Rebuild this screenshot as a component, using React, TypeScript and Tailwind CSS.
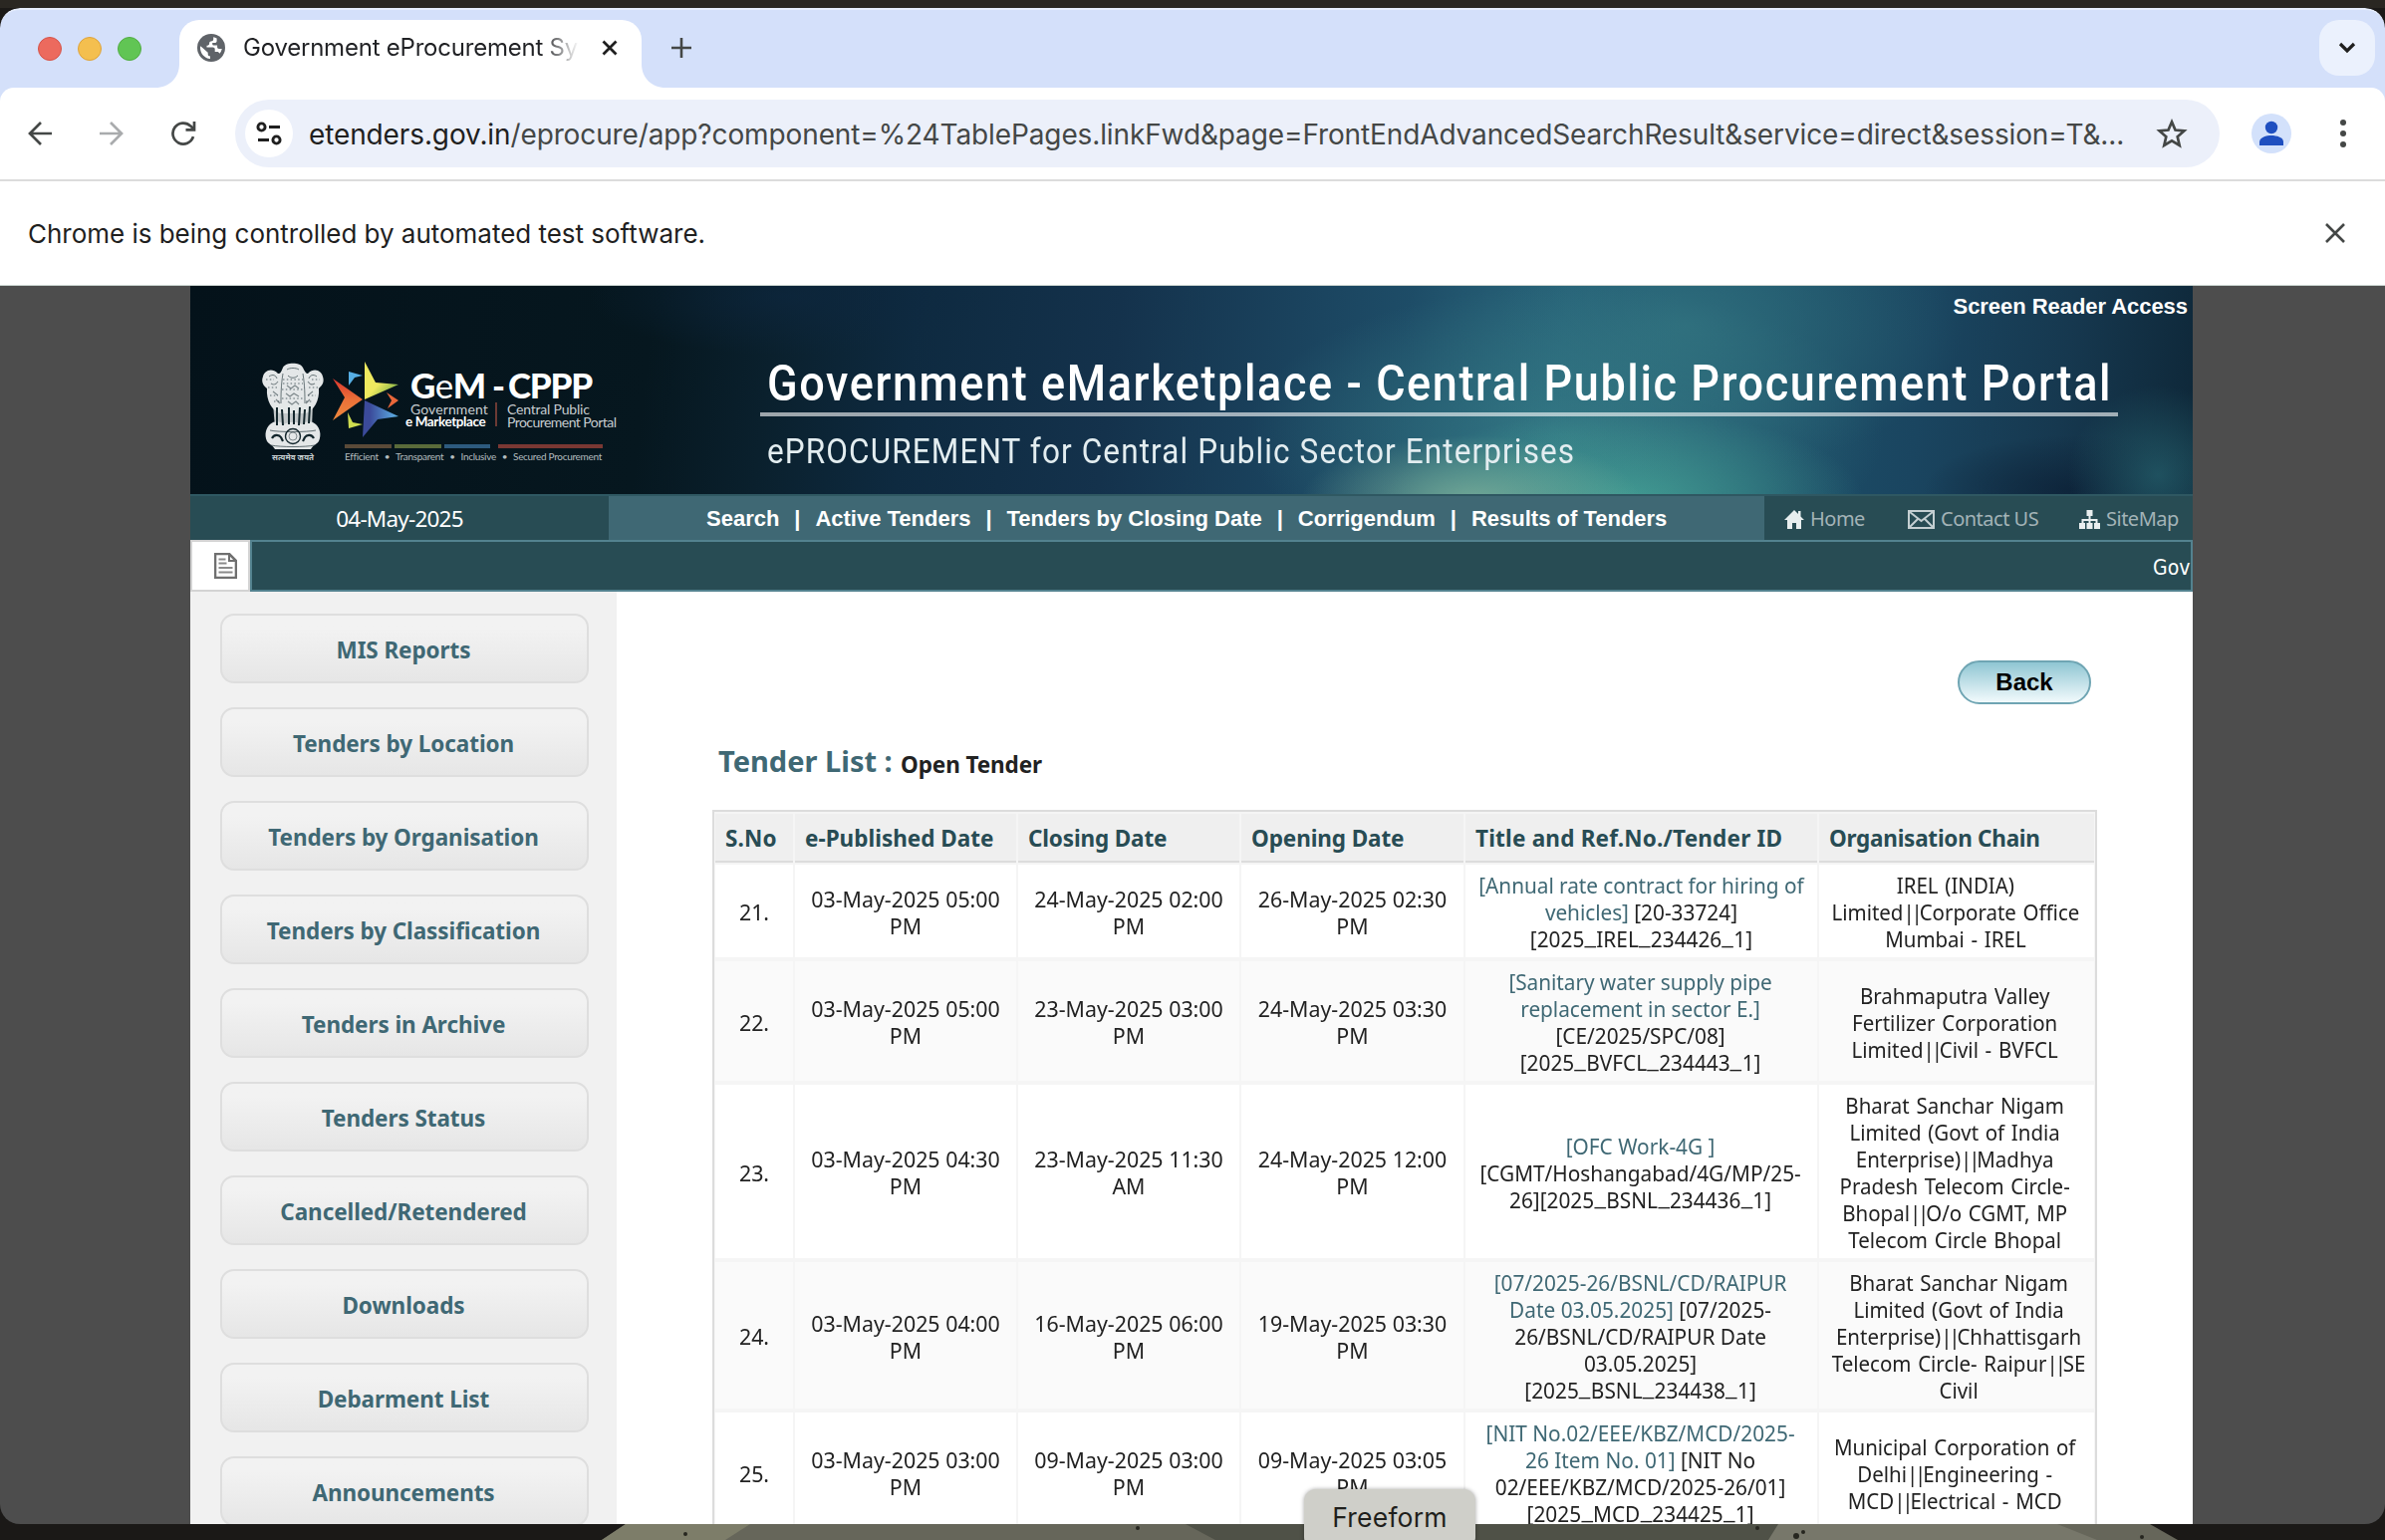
import { Fragment, type ReactNode } from 'react';

type Row = {
  no: string;
  published: [string, string];
  closing: [string, string];
  opening: [string, string];
  title: [string, string][];
  org: string[];
};

const ROWS: Row[] = [
  {
    no: '21.',
    published: ['03-May-2025 05:00', 'PM'],
    closing: ['24-May-2025 02:00', 'PM'],
    opening: ['26-May-2025 02:30', 'PM'],
    title: [
      ['[Annual rate contract for hiring of', ''],
      ['vehicles]', ' [20-33724]'],
      ['', '[2025_IREL_234426_1]'],
    ],
    org: ['IREL (INDIA)', 'Limited||Corporate Office', 'Mumbai - IREL'],
  },
  {
    no: '22.',
    published: ['03-May-2025 05:00', 'PM'],
    closing: ['23-May-2025 03:00', 'PM'],
    opening: ['24-May-2025 03:30', 'PM'],
    title: [
      ['[Sanitary water supply pipe', ''],
      ['replacement in sector E.]', ''],
      ['', '[CE/2025/SPC/08]'],
      ['', '[2025_BVFCL_234443_1]'],
    ],
    org: ['Brahmaputra Valley', 'Fertilizer Corporation', 'Limited||Civil - BVFCL'],
  },
  {
    no: '23.',
    published: ['03-May-2025 04:30', 'PM'],
    closing: ['23-May-2025 11:30', 'AM'],
    opening: ['24-May-2025 12:00', 'PM'],
    title: [
      ['[OFC Work-4G ]', ''],
      ['', '[CGMT/Hoshangabad/4G/MP/25-'],
      ['', '26][2025_BSNL_234436_1]'],
    ],
    org: [
      'Bharat Sanchar Nigam',
      'Limited (Govt of India',
      'Enterprise)||Madhya',
      'Pradesh Telecom Circle-',
      'Bhopal||O/o CGMT, MP',
      'Telecom Circle Bhopal',
    ],
  },
  {
    no: '24.',
    published: ['03-May-2025 04:00', 'PM'],
    closing: ['16-May-2025 06:00', 'PM'],
    opening: ['19-May-2025 03:30', 'PM'],
    title: [
      ['[07/2025-26/BSNL/CD/RAIPUR', ''],
      ['Date 03.05.2025]', ' [07/2025-'],
      ['', '26/BSNL/CD/RAIPUR Date'],
      ['', '03.05.2025]'],
      ['', '[2025_BSNL_234438_1]'],
    ],
    org: [
      'Bharat Sanchar Nigam',
      'Limited (Govt of India',
      'Enterprise)||Chhattisgarh',
      'Telecom Circle- Raipur||SE',
      'Civil',
    ],
  },
  {
    no: '25.',
    published: ['03-May-2025 03:00', 'PM'],
    closing: ['09-May-2025 03:00', 'PM'],
    opening: ['09-May-2025 03:05', 'PM'],
    title: [
      ['[NIT No.02/EEE/KBZ/MCD/2025-', ''],
      ['26 Item No. 01]', ' [NIT No'],
      ['', '02/EEE/KBZ/MCD/2025-26/01]'],
      ['', '[2025_MCD_234425_1]'],
    ],
    org: ['Municipal Corporation of', 'Delhi||Engineering -', 'MCD||Electrical - MCD'],
  },
];

const SIDEBAR = [
  'MIS Reports',
  'Tenders by Location',
  'Tenders by Organisation',
  'Tenders by Classification',
  'Tenders in Archive',
  'Tenders Status',
  'Cancelled/Retendered',
  'Downloads',
  'Debarment List',
  'Announcements',
];

const MENU = ['Search', 'Active Tenders', 'Tenders by Closing Date', 'Corrigendum', 'Results of Tenders'];

const HEADERS: [string, string][] = [
  ['S.No', 'tracking-[0.2px]'],
  ['e-Published Date', 'tracking-[0px]'],
  ['Closing Date', 'tracking-[-0.15px]'],
  ['Opening Date', 'tracking-[-0.1px]'],
  ['Title and Ref.No./Tender ID', 'tracking-[0.2px]'],
  ['Organisation Chain', 'tracking-[-0.26px]'],
];

function TabStrip() {
  return (
    <div className="relative flex h-20 w-full shrink-0 rounded-t-[20px] border-t-2 border-[#e6edfc] bg-[#d4e0fa]">
      <div className="flex w-[180px] items-center gap-4 pl-[38px]">
        <span className="h-6 w-6 rounded-full border border-[#d5544a] bg-[#ec6a5e]" />
        <span className="h-6 w-6 rounded-full border border-[#dea33c] bg-[#f4bf4f]" />
        <span className="h-6 w-6 rounded-full border border-[#51ad42] bg-[#61c554]" />
      </div>
      <div className="relative mt-[10px] flex h-[68px] w-[464px] items-center rounded-t-[20px] bg-white pb-3 pl-[18px]">
        <svg className="absolute bottom-0 -left-6" width="24" height="24" viewBox="0 0 24 24">
          <path d="M24 0v24H0C14 24 24 14 24 0Z" fill="#fff" />
        </svg>
        <svg className="absolute bottom-0 -right-6" width="24" height="24" viewBox="0 0 24 24">
          <path d="M0 0v24h24C10 24 0 14 0 0Z" fill="#fff" />
        </svg>
        <svg width="28" height="28" viewBox="0 0 28 28">
          <circle cx="14" cy="14" r="14" fill="#5f6368" />
          <path d="M16.200 3.300v2c0 1.400-1.100 2.200-2.400 2.300-1.300.1-1.700.9-1.700 2.100 0 1.500-1.300 2-2.600 2v1.800h6.200c1.300 0 2 .8 2 2v2.600h2c1.400 0 2.200.6 2.700 1.700a11 11 0 0 0 2.400-4.800h-3c-1 0-1.700-.7-1.700-1.700v-1.700h-3.400c-1 0-1.500-.8-1.500-1.700V9.100h2.400c1.100 0 2-.8 2-1.900V4.500a11 11 0 0 0-3.400-1.200Z" fill="#fff" />
          <path d="M3 14c0 5.800 4.400 10.600 10 11v-2.500c-1.400 0-2.300-1-2.300-2.300v-1.500L3.300 12.200C3.100 12.800 3 13.400 3 14Z" fill="#fff" />
        </svg>
        <span className="ml-[18px] w-[337px] overflow-hidden whitespace-nowrap bg-gradient-to-r from-[#202124] from-[89%] to-transparent bg-clip-text font-[Inter] text-[24px] leading-8 tracking-[-0.22px] text-transparent">
          Government eProcurement Sy
        </span>
        <svg className="ml-[23px]" width="16" height="16" viewBox="0 0 16 16">
          <path d="m1.500 1.500 13 13m0-13-13 13" stroke="#1f1f1f" strokeWidth="2.800" />
        </svg>
      </div>
      <svg className="ml-[30px] mt-[28px]" width="20" height="20" viewBox="0 0 20 20">
        <path d="M10 0v20M0 10h20" stroke="#444746" strokeWidth="2.600" />
      </svg>
      <div className="ml-auto mr-[10px] mt-[10px] flex h-14 w-14 items-center justify-center rounded-[20px] bg-[#ebf1fd]">
        <svg width="18" height="12" viewBox="0 0 18 12">
          <path d="m2 2 7 7 7-7" stroke="#1f1f1f" strokeWidth="3.200" fill="none" />
        </svg>
      </div>
    </div>
  );
}

function Toolbar() {
  return (
    <div className="w-full shrink-0 bg-[#d4e0fa]">
      <div className="flex h-[94px] items-center rounded-t-[14px] border-b-2 border-[#dcdcdc] bg-white pl-7">
        <svg width="24" height="24" viewBox="0 0 24 24" fill="none" stroke="#444746" strokeWidth="2.700">
          <path d="M24 12H2.500M13 1 2 12l11 11" />
        </svg>
        <svg className="ml-[48px]" width="24" height="24" viewBox="0 0 24 24" fill="none" stroke="#a9abad" strokeWidth="2.700">
          <path d="M0 12h21.500M11 1l11 11-11 11" />
        </svg>
        <svg className="ml-[47px]" width="26" height="26" viewBox="0 0 26 26" fill="none" stroke="#444746" strokeWidth="2.700">
          <path d="M23 16.200A10.500 10.500 0 1 1 20.400 5.600L24 9" />
          <path d="M24 1v8.400H15.500" />
        </svg>
        <div className="ml-[39px] flex h-[68px] w-[1992px] items-center rounded-full bg-[#ecf0fa] pl-[10px]">
          <div className="flex h-12 w-12 items-center justify-center rounded-full bg-white">
            <svg width="26" height="24" viewBox="0 0 26 24" fill="none" stroke="#1f1f1f" strokeWidth="2.900">
              <circle cx="5.500" cy="5.500" r="3.600" />
              <path d="M13 5.500h11M2 18.500h11" />
              <circle cx="20.500" cy="18.500" r="3.600" />
            </svg>
          </div>
          <span className="ml-4 w-[1850px] whitespace-nowrap pt-px font-[Inter] text-[28px] leading-9 tracking-[-0.12px] text-[#444746]">
            <span className="text-[#1f1f1f]">etenders.gov.in</span>
            /eprocure/app?component=%24TablePages.linkFwd&amp;page=FrontEndAdvancedSearchResult&amp;service=direct&amp;session=T&amp;...
          </span>
          <svg className="ml-[4px]" width="32" height="30" viewBox="0 0 32 30">
            <path
              d="m16 3.400 3.500 8.200 8.900.8-6.700 5.900 2 8.700L16 22.400 8.300 27l2-8.700-6.700-5.900 8.900-.8Z"
              fill="none"
              stroke="#444746"
              strokeWidth="2.700"
            />
          </svg>
        </div>
        <div className="ml-8 h-10 w-10 overflow-hidden rounded-full bg-[#d3e1fb]">
          <svg width="40" height="40" viewBox="0 0 40 40" fill="#1f4fc0">
            <circle cx="20" cy="14" r="6.200" />
            <path d="M8 32v-3.500c0-4.600 7-6.500 12-6.500s12 1.900 12 6.500V32Z" />
          </svg>
        </div>
        <svg className="ml-[49px]" width="6" height="28" viewBox="0 0 6 28" fill="#444746">
          <circle cx="3" cy="3" r="3" />
          <circle cx="3" cy="14" r="3" />
          <circle cx="3" cy="25" r="3" />
        </svg>
      </div>
    </div>
  );
}

function Emblem() {
  return (
    <svg width="64" height="104" viewBox="0 0 64 104">
      <g fill="#e4e7e8">
        <path d="M22 6c2-5 17-6 20 0 2 4 3 6 5 6 7-7 14-2 15 3 2 6-1 9-4 12 1 12-5 22-13 25H19C11 49 5 39 6 27c-4-3-6-7-4-12 1-5 8-10 15-3 3 0 3-2 5-6Z" />
        <path d="M12 42h40l-1 24H14Z" opacity=".85" />
        <path d="M9 63c5-4 10-3 14 0 5-3 13-3 18 0 4-3 9-4 14 0 4 4 6 10 3 17-2 3-6 4-8 8H14c-2-4-6-5-8-8-3-7-1-13 3-17Z" />
      </g>
      <g stroke="#13262c" fill="none" strokeWidth="1.800">
        <path d="M16 46v18M21 48l1 16M28 46v17M33 49v14M39 46l-1 18M44 48l-1 15M49 45l-1 17" strokeWidth="2" />
        <path d="M8 15c4-3 7-1 8 2M56 15c-4-3-7-1-8 2M26 8c3-2 9-2 12 0M27 14c3 3 7 3 10 0M22 12c-2 12-2 22-2 30M42 12c2 12 2 22 2 30" strokeWidth="1" opacity=".6" />
        <path d="M10 22c3 2 5 1 7-2M54 22c-3 2-5 1-7-2M12 30l5 4M52 30l-5 4M26 24l4 3 4-3 4 3M25 32l4 3 4-3 5 3M27 40l4 3 4-3 3 3M15 38l4 4M49 38l-4 4" strokeWidth="1.100" opacity=".5" />
        <path d="M11 77c2-4 7-4 9-1l2 4M53 77c-2-4-7-4-9-1l-2 4" strokeWidth="2.200" />
        <circle cx="32" cy="75" r="7.500" strokeWidth="1.400" />
        <circle cx="32" cy="75" r="4" strokeWidth=".8" opacity=".6" />
        <path d="M9 69c8 2 38 2 46 0M10 84c10 2 34 2 44 0" strokeWidth=".9" opacity=".7" />
      </g>
      <g stroke="#13262c" strokeWidth="1" strokeDasharray="1.500 2.300" opacity=".65">
        <path d="M22 18h20M22 22h20M21 28h22M21 37h22M7 26h9M48 26h9M9 34h8M47 34h8M13 40h6M45 40h6M5 18h8M51 18h8" />
      </g>
      <text x="32" y="99" textAnchor="middle" fontSize="8.500" fontWeight="700" fill="#c6ced0" fontFamily="'Noto Sans Devanagari','Noto Sans',sans-serif" textLength="42" lengthAdjust="spacingAndGlyphs">
        सत्यमेव जयते
      </text>
    </svg>
  );
}

function GemStar() {
  return (
    <svg width="68" height="78" viewBox="0 0 68 78">
      <defs>
        <linearGradient id="gy" x1="0" y1="0" x2="1" y2="1">
          <stop offset=".5" stopColor="#efe95f" />
          <stop offset="1" stopColor="#4f9a3a" />
        </linearGradient>
        <linearGradient id="gr" x1="0" y1="0" x2="0" y2="1">
          <stop offset="0" stopColor="#d9352e" />
          <stop offset=".5" stopColor="#ec7038" />
          <stop offset="1" stopColor="#ee8a3e" />
        </linearGradient>
        <linearGradient id="gb" x1="0" y1="0" x2="1" y2="0">
          <stop offset=".2" stopColor="#3b4a9a" />
          <stop offset="1" stopColor="#5fb6ea" />
        </linearGradient>
      </defs>
      <path d="M33 1l11 21 23 2-34 15Z" fill="url(#gy)" />
      <path d="M1 18l30 21L1 60l12-23Z" fill="url(#gr)" />
      <path d="M33 40l34 16-21 3-15 18Z" fill="url(#gb)" />
      <path d="M17 11l14 4-8 2-6 8Z" fill="#56aee4" />
      <path d="M55 32l12 8-11 8 4-8Z" fill="#e9673a" />
      <path d="M16 52l5 10 10 2-14 4Z" fill="#cfdc4f" />
    </svg>
  );
}

function GemLogo() {
  return (
    <div className="flex pl-[71px] pt-[76px] text-white">
      <Emblem />
      <div className="-mt-px ml-[7px] w-[70px]">
        <GemStar />
      </div>
      <div className="relative w-[220px] whitespace-nowrap font-[Lato]">
        <div className="flex h-[42px] items-end pt-[7px] text-[35px] font-black leading-[38px]">
          <span className="w-[89px] pl-[9px] tracking-[-0.6px]">
            G<span className="font-normal">e</span>M
          </span>
          <span className="w-[18px] pl-[2px]">-</span>
          <span className="tracking-[-1.2px]">CPPP</span>
        </div>
        <div className="-mt-px flex text-[14px] leading-[13px]">
          <div className="w-[89px] pl-[5px]">
            <div className="pl-[4px] tracking-[0.1px] text-[#c5cccf]">Government</div>
            <div className="-ml-[1px] text-[13.5px] font-bold tracking-[-0.4px]">e Marketplace</div>
          </div>
          <div className="ml-[5px] mr-[10px] h-[24px] w-[2px] bg-[#6b3a34]" />
          <div className="text-[#c5cccf]">
            <div className="tracking-[-0.2px]">Central Public</div>
            <div className="tracking-[-0.55px]">Procurement Portal</div>
          </div>
        </div>
        <div className="absolute left-[-57px] top-[83px] flex h-1">
          <span className="mr-[3px] w-[47px] bg-[#5a4a38]" />
          <span className="mr-[3px] w-[47px] bg-[#5a6b3a]" />
          <span className="mr-2 w-[46px] bg-[#2d5a7e]" />
          <span className="w-[105px] bg-[#7a3833]" />
        </div>
        <div className="absolute left-[-57px] top-[89px] flex w-[258px] justify-between text-[10px] leading-[13px] tracking-[-0.3px] text-[#b3bcbf]">
          <span>Efficient</span>
          <span>•</span>
          <span>Transparent</span>
          <span>•</span>
          <span>Inclusive</span>
          <span>•</span>
          <span>Secured Procurement</span>
        </div>
      </div>
    </div>
  );
}

function Banner() {
  return (
    <div className="flex h-[209px] shrink-0 overflow-hidden bg-[radial-gradient(ellipse_170px_65px_at_1285px_215px,rgba(128,178,155,0.8),transparent),radial-gradient(ellipse_240px_90px_at_1440px_215px,rgba(74,172,154,0.75),transparent),radial-gradient(ellipse_90px_90px_at_1975px_190px,rgba(38,98,110,0.7),transparent),radial-gradient(ellipse_150px_55px_at_1890px_205px,rgba(12,32,54,0.8),transparent),radial-gradient(ellipse_280px_150px_at_1500px_40px,rgba(56,126,134,0.6),transparent),radial-gradient(ellipse_320px_150px_at_1380px_150px,rgba(62,138,142,0.6),transparent),radial-gradient(ellipse_200px_60px_at_600px_10px,rgba(14,40,66,0.6),transparent),linear-gradient(97deg,#04121a_0%,#06171f_23%,#0a202d_29%,#0e2a40_36%,#14324c_46%,#1b4560_56%,#225a74_68%,#1d5069_78%,#1a4560_86%,#16384f_93%,#0e2738_100%)]">
      <div className="w-[572px] shrink-0">
        <GemLogo />
      </div>
      <div className="flex w-[1438px] flex-col font-[Roboto] text-white">
        <div className="flex h-[43px] items-center justify-end pb-[2px] pr-[5px] font-['Liberation_Sans'] text-[22px] font-bold leading-6 tracking-[-0.05px]">
          Screen Reader Access
        </div>
        <div className="mt-[24px] h-[64px] w-[1363px] border-b-4 border-white/60 pl-[7px] pt-px">
          <div className="w-[1497px] origin-left scale-x-90 whitespace-nowrap text-[50px] font-medium leading-[60px] tracking-[1.78px]">
            Government eMarketplace - Central Public Procurement Portal
          </div>
        </div>
        <div className="ml-[7px] mt-[14px] w-[900px] origin-left scale-x-90 whitespace-nowrap text-[35px] leading-[44px] tracking-[1.24px] text-[#e3edf0]">
          ePROCUREMENT for Central Public Sector Enterprises
        </div>
      </div>
    </div>
  );
}

function NavBar() {
  return (
    <div className="flex h-[46px] shrink-0 border-t-2 border-[#2f5862] bg-[#284c54] text-white">
      <div className="flex w-[420px] items-center justify-center pt-[2px] font-['Noto_Sans'] text-[22.5px] leading-6 tracking-[-0.8px]">
        04-May-2025
      </div>
      <div className="flex w-[1160px] items-center whitespace-nowrap bg-[#3f6874] pl-[98px] pt-[2px] font-['Liberation_Sans'] text-[22px] font-bold leading-6">
        {MENU.map((item, i) => (
          <Fragment key={item}>
            {i > 0 && <span className="w-[36px] text-center">|</span>}
            <span>{item}</span>
          </Fragment>
        ))}
      </div>
      <div className="flex items-center whitespace-nowrap pl-[20px] pt-[2px] font-['Noto_Sans'] text-[20px] leading-6 tracking-[-0.5px] text-[#a3b3b7]">
        <svg width="20" height="19" viewBox="0 0 20 19" fill="#e8eeef">
          <path d="M10 0 0 10h3v9h5v-6h4v6h5v-9h3l-3.500-3.500V1H14v3Z" />
        </svg>
        <span className="ml-[6px] w-[98px]">Home</span>
        <svg width="27" height="19" viewBox="0 0 27 19" fill="none" stroke="#c4cfd2" strokeWidth="2">
          <path d="M1 1h25v17H1ZM2 2l11.500 9L25 2M2 17l8-8M25 17l-8-8" />
        </svg>
        <span className="ml-[6px] w-[139px]">Contact US</span>
        <svg width="21" height="19" viewBox="0 0 21 19" fill="#e8eeef">
          <path d="M7.500 0h6v6h-2v3h7v4H21v6h-6v-6h1.500v-2h-5v2h2v6h-6v-6h2v-2h-5v2H6v6H0v-6h2.500V9h7V6h-2Z" />
        </svg>
        <span className="ml-[6px]">SiteMap</span>
      </div>
    </div>
  );
}

function Marquee() {
  return (
    <div className="flex h-[52px] shrink-0">
      <div className="flex w-[60px] items-center justify-center border-2 border-[#d3d3d3] bg-white pl-[10px]">
        <svg width="23" height="26" viewBox="0 0 23 26" fill="none" stroke="#6f6f6f" strokeWidth="2">
          <path d="M1 1h14l7 7v17H1Z" strokeWidth="2.600" />
          <path d="M15 1v7h7" strokeWidth="2" />
          <path d="M4.500 6.500h7M4.500 10.500h8M4.500 15h14M4.500 19.500h14" stroke="#8a8a8a" />
        </svg>
      </div>
      <div className="flex w-[1950px] items-center overflow-hidden border-2 border-[#53828f] bg-[#284c54]">
        <span className="ml-[1908px] whitespace-nowrap pt-[3px] font-['DejaVu_Sans_Condensed','DejaVu_Sans'] text-[21px] leading-6 text-white">
          Gov
        </span>
      </div>
    </div>
  );
}

function Sidebar() {
  return (
    <div className="flex w-[428px] shrink-0 flex-col gap-6 bg-[#f1f1f1] pl-[30px] pt-[22px]">
      {SIDEBAR.map((item) => (
        <div
          key={item}
          className="flex h-[70px] w-[370px] shrink-0 items-center justify-center rounded-[14px] border-2 border-[#dedede] bg-gradient-to-b from-[#f2f2f2] from-20% to-[#e6e6e6] pr-[2px] pt-[3px] font-['Noto_Sans'] text-[22.5px] font-bold leading-7 tracking-[-0.08px] text-[#3f6874]"
        >
          {item}
        </div>
      ))}
    </div>
  );
}

/** Opens up underscores and tightens double bars so lines keep an even rhythm. */
function Line({ text }: { text: string }) {
  return (
    <>
      {text.split(/(\|\||_)/).map((part, i) => {
        if (part === '||') return <span key={i} className="tracking-[-3.5px]">||</span>;
        if (part === '_') return <span key={i} className="mx-[1.5px] inline-block -translate-y-[3px] scale-x-125">_</span>;
        return <Fragment key={i}>{part}</Fragment>;
      })}
    </>
  );
}

function Cell({ className, children }: { className: string; children: ReactNode }) {
  return <div className={`flex flex-col items-center justify-center ${className}`}>{children}</div>;
}

function TenderTable() {
  return (
    <div className="ml-[96px] w-[1390px] whitespace-nowrap border-2 border-[#dcdcdc] bg-[#f5f5f5] px-px pt-[2px] font-['Noto_Sans'] text-[22.5px] leading-[27px]">
      <div className="mb-[2px] grid h-[49px] grid-cols-[78px_222px_222px_223px_353px_276px] gap-[2px] font-bold text-[#284c54]">
        {HEADERS.map(([label, tracking]) => (
          <div key={label} className={`flex items-center border-b-2 border-[#dcdcdc] bg-[#efefef] pl-[10px] pt-px ${tracking}`}>
            {label}
          </div>
        ))}
      </div>
      {ROWS.map((row, i) => (
        <div
          key={row.no}
          className="grid grid-cols-[78px_222px_222px_223px_353px_276px] gap-x-[2px] border-b-4 border-[#f5f5f5] text-[#222]"
        >
          {[
            <Cell key="n" className="scale-x-95 pt-[2px]">
              {row.no}
            </Cell>,
            ...[row.published, row.closing, row.opening].map((d, k) => (
              <Cell key={k} className="scale-x-95 pt-[2px]">
                <span>{d[0]}</span>
                <span>{d[1]}</span>
              </Cell>
            )),
            <Cell key="t" className="scale-x-[0.925] pb-[5px] pr-[2px] pt-[7px]">
              {row.title.map(([link, rest], k) => (
                <span key={k} className="whitespace-pre">
                  <span className={/\d/.test(link) ? 'text-[#3f6874]' : 'tracking-[-0.06px] text-[#3f6874]'}>{link}</span>
                  <Line text={rest} />
                </span>
              ))}
            </Cell>,
            <Cell key="o" className="scale-x-[0.91] pb-[5px] pr-[4px] pt-[7px] [word-spacing:1.5px]">
              {row.org.map((line) => (
                <span key={line}>
                  <Line text={line} />
                </span>
              ))}
            </Cell>,
          ].map((cell, k) => (
            <div key={k} className={i % 2 ? 'grid bg-[#fafafa]' : 'grid bg-white'}>
              {cell}
            </div>
          ))}
        </div>
      ))}
    </div>
  );
}

function Content() {
  return (
    <div className="min-w-0 flex-1 bg-white pt-[69px]">
      <div className="ml-[1346px] flex h-[44px] w-[134px] items-center justify-center rounded-full border-2 border-[#6fa5b3] bg-gradient-to-b from-[#8fc6d3] to-[#f2fafc] font-['Liberation_Sans'] text-[24px] font-bold text-black">
        Back
      </div>
      <div className="mb-[25px] ml-[102px] mt-[37px] flex h-[44px] items-baseline whitespace-nowrap font-['Noto_Sans'] font-bold">
        <span className="w-[183px] text-[29px] leading-[40px] text-[#3f6874]">Tender List :</span>
        <span className="text-[22.5px] tracking-[-0.1px] text-[#222]">
          <span className="relative top-px">Open Tender</span>
        </span>
      </div>
      <TenderTable />
    </div>
  );
}

function Wallpaper() {
  return (
    <svg className="h-4 w-full shrink-0" viewBox="0 0 2394 16" preserveAspectRatio="none">
      <path d="M0 0h2394v16H0Z" fill="#1b1917" />
      <path d="M628 0h1530l28 16H604Z" fill="#66665a" />
      <path d="M628 0h125l-25 16H604Z" fill="#7d7d69" />
      <path d="M1190 0h700l-30 16h-640Z" fill="#4f5147" />
      <path d="M1785 0h280l40 16h-330Z" fill="#77776a" />
      <g fill="#26261f">
        <circle cx="688" cy="10" r="2" />
        <circle cx="1142" cy="4" r="2" />
        <circle cx="1764" cy="4" r="2" />
        <circle cx="1803" cy="12" r="3" />
        <circle cx="1810" cy="8" r="2" />
        <circle cx="2150" cy="13" r="2" />
      </g>
    </svg>
  );
}

export default function App() {
  return (
    <div className="relative flex h-[1546px] w-[2394px] flex-col overflow-hidden bg-[#1b1917]">
      <div className="h-2 w-full shrink-0 bg-[#2a2722]" />
      <div className="flex h-[1522px] w-full shrink-0 flex-col overflow-hidden rounded-[20px]">
        <TabStrip />
        <Toolbar />
        <div className="flex h-[105px] shrink-0 items-center justify-between border-b border-[#c9d3cf] bg-white pl-7 pr-10 font-[Inter] text-[26px] leading-8 tracking-[-0.02px] text-[#1f1f1f]">
          <span className="pt-[2px]">Chrome is being controlled by automated test software.</span>
          <svg width="20" height="20" viewBox="0 0 20 20">
            <path d="m1 1 18 18M19 1 1 19" stroke="#444746" strokeWidth="2.600" />
          </svg>
        </div>
        <div className="flex h-[1243px] shrink-0 justify-start overflow-hidden bg-[#4d4d4d] pl-[191px]">
          <div className="flex w-[2010px] shrink-0 flex-col">
            <Banner />
            <NavBar />
            <Marquee />
            <div className="flex min-h-0 flex-1 overflow-hidden">
              <Sidebar />
              <Content />
            </div>
          </div>
        </div>
      </div>
      <Wallpaper />
      <div className="absolute left-[1309px] top-[1495px] flex h-[60px] w-[172px] justify-center rounded-[12px] bg-[#cfcfc9] pt-[12px] font-[Inter] text-[26.500px] leading-8 tracking-[0.2px] text-[#1f1f1c] shadow-[0_0_4px_rgba(0,0,0,0.35)]">
        Freeform
      </div>
    </div>
  );
}
